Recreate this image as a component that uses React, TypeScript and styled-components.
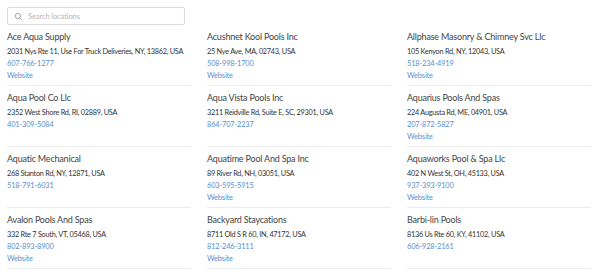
import styled, { createGlobalStyle } from 'styled-components';

type Location = {
  name: string;
  address: string;
  phone: string;
  website?: boolean;
};

const locations: Location[] = [
  { name: 'Ace Aqua Supply', address: '2031 Nys Rte 11, Use For Truck Deliveries, NY, 13862, USA', phone: '607-766-1277', website: true },
  { name: 'Acushnet Kool Pools Inc', address: '25 Nye Ave, MA, 02743, USA', phone: '508-998-1700', website: true },
  { name: 'Allphase Masonry & Chimney Svc Llc', address: '105 Kenyon Rd, NY, 12043, USA', phone: '518-234-4919', website: true },
  { name: 'Aqua Pool Co Llc', address: '2352 West Shore Rd, RI, 02889, USA', phone: '401-309-5084' },
  { name: 'Aqua Vista Pools Inc', address: '3211 Reidville Rd, Suite E, SC, 29301, USA', phone: '864-707-2237' },
  { name: 'Aquarius Pools And Spas', address: '224 Augusta Rd, ME, 04901, USA', phone: '207-872-5827', website: true },
  { name: 'Aquatic Mechanical', address: '268 Stanton Rd, NY, 12871, USA', phone: '518-791-6031' },
  { name: 'Aquatime Pool And Spa Inc', address: '89 River Rd, NH, 03051, USA', phone: '603-595-5915', website: true },
  { name: 'Aquaworks Pool & Spa Llc', address: '402 N West St, OH, 45133, USA', phone: '937-393-9100', website: true },
  { name: 'Avalon Pools And Spas', address: '332 Rte 7 South, VT, 05468, USA', phone: '802-893-8900', website: true },
  { name: 'Backyard Staycations', address: '8711 Old S R 60, IN, 47172, USA', phone: '812-246-3111', website: true },
  { name: 'Barbi-lin Pools', address: '8136 Us Rte 60, KY, 41102, USA', phone: '606-928-2161' },
];

const GlobalStyle = createGlobalStyle`
  body {
    margin: 0;
    background: #fff;
    font-family: Lato, 'Noto Sans', sans-serif;
  }
`;

export default function App() {
  return (
    <Page>
      <GlobalStyle />
      <SearchBox>
        <svg width="9" height="9" viewBox="0 0 24 24" fill="none" stroke="#9a9a9a" strokeWidth="2.2" strokeLinecap="round">
          <circle cx="10.5" cy="10.5" r="7" />
          <line x1="15.5" y1="15.5" x2="21" y2="21" />
        </svg>
        <SearchInput placeholder="Search locations" />
      </SearchBox>
      <Grid>
        {locations.map((loc) => (
          <Card key={loc.name}>
            <Name>{loc.name}</Name>
            <Address>{loc.address}</Address>
            <Link href="#">{loc.phone}</Link>
            {loc.website && <Link href="#">Website</Link>}
          </Card>
        ))}
      </Grid>
    </Page>
  );
}

const Page = styled.div`
  padding: 7px 9px 0 7px;
`;

const SearchBox = styled.div`
  width: 178px;
  height: 18px;
  box-sizing: border-box;
  border: 1px solid #dcdcdc;
  border-radius: 2px;
  display: flex;
  align-items: center;
  gap: 5px;
  padding: 0 6px;
`;

const SearchInput = styled.input`
  border: none;
  outline: none;
  padding: 0;
  flex: 1;
  min-width: 0;
  font-family: inherit;
  font-size: 7.5px;
  letter-spacing: -0.1px;
  color: #333;

  &::placeholder {
    color: #b5b5b5;
  }
`;

const Grid = styled.div`
  display: grid;
  grid-template-columns: repeat(3, 184px);
  column-gap: 16px;
`;

const Card = styled.div`
  height: 61px;
  box-sizing: border-box;
  padding-top: 5px;
  border-bottom: 1px solid #ececec;
  display: flex;
  flex-direction: column;
`;

const Name = styled.div`
  font-size: 9px;
  letter-spacing: -0.2px;
  line-height: 14px;
  color: #444;
  margin-bottom: 2px;
`;

const Address = styled.div`
  font-size: 7.3px;
  letter-spacing: -0.25px;
  line-height: 12px;
  color: #333;
  white-space: nowrap;
`;

const Link = styled.a`
  font-size: 7.4px;
  letter-spacing: -0.15px;
  line-height: 12px;
  color: #5a8fd0;
  text-decoration: none;
`;
